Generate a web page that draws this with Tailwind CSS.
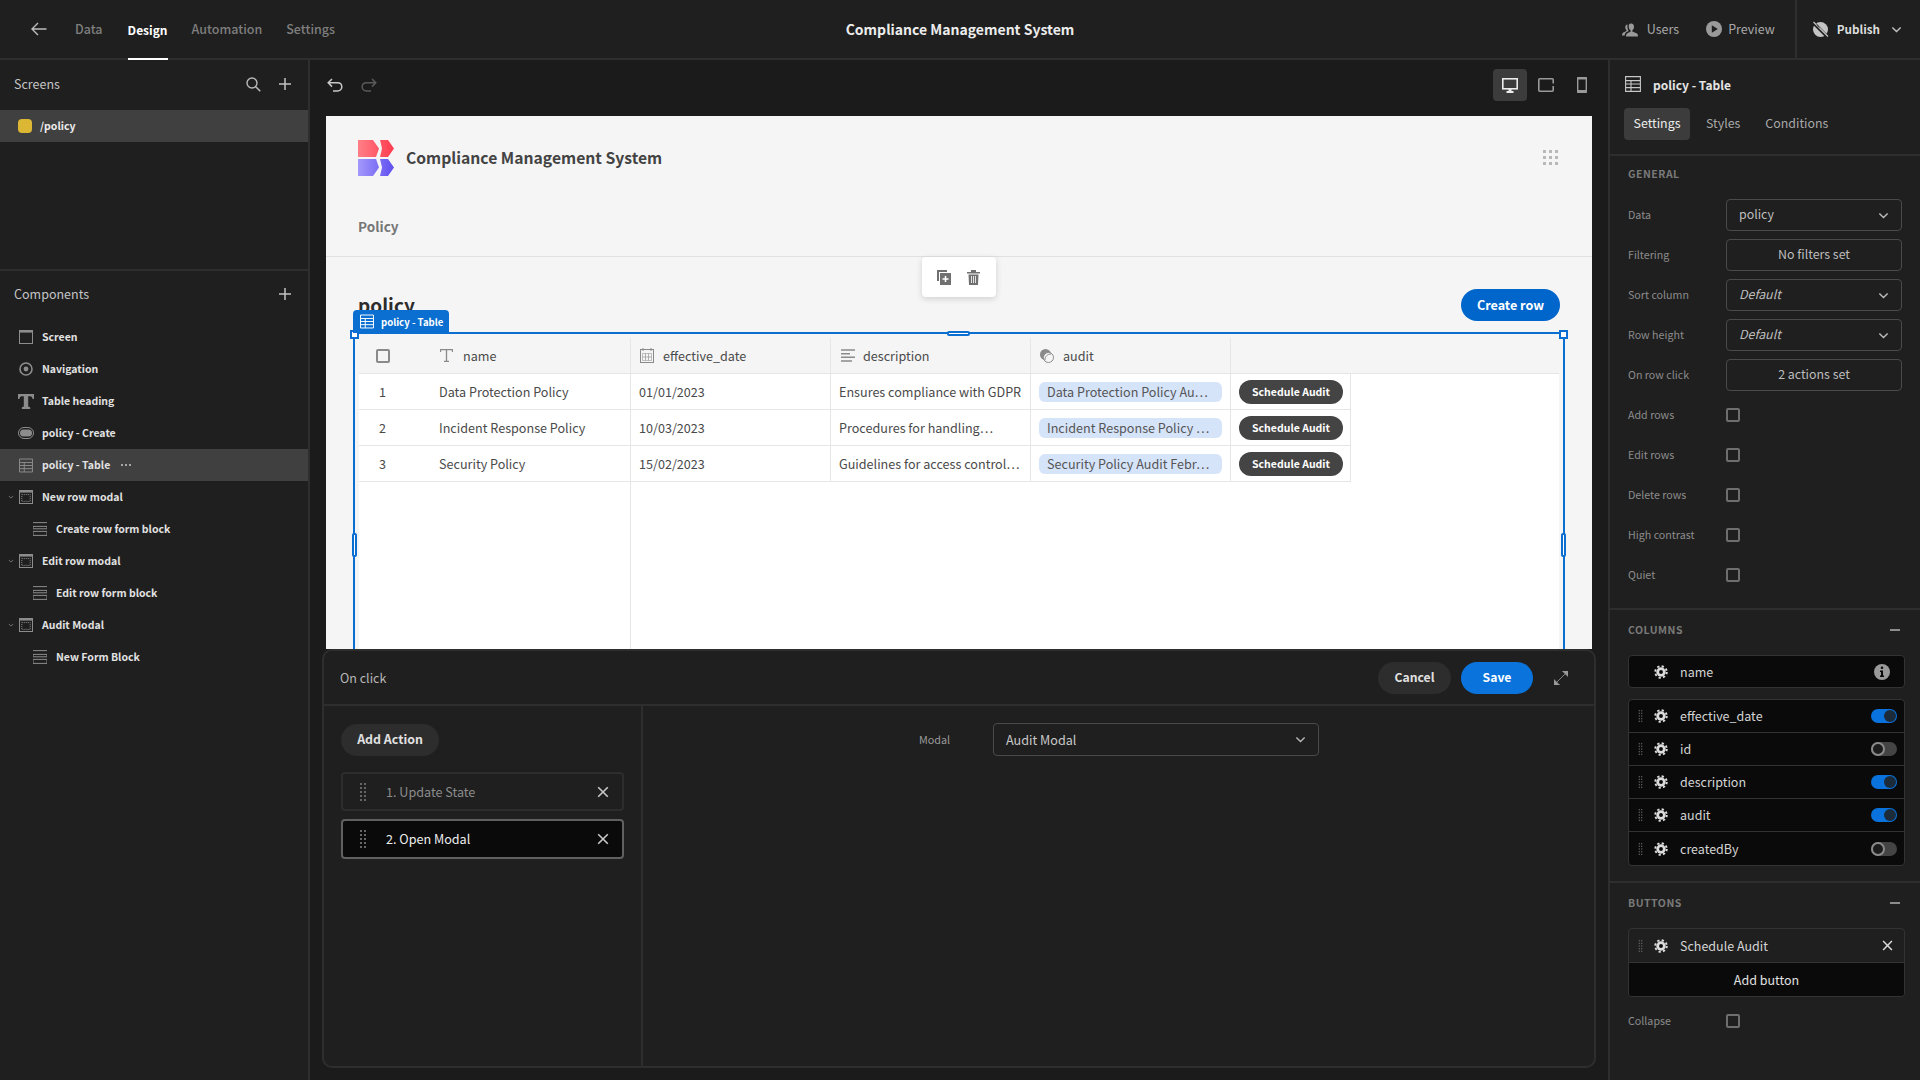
<!DOCTYPE html>
<html lang="en">
<head>
<meta charset="UTF-8">
<title>Compliance Management System</title>
<script src="https://cdn.jsdelivr.net/npm/@tailwindcss/browser@4"></script>
</head>
<body class="w-[1920px] h-[1080px] overflow-hidden bg-[#1f1f1f] text-[#c8c8c8] leading-[1.25] font-['Noto_Sans_CJK_SC','Liberation_Sans',sans-serif]">

<svg class="hidden" width="0" height="0">
  <symbol id="chev" viewBox="0 0 12 12"><path d="M1.5 3.8 6 8.3l4.5-4.5" fill="none" stroke="currentColor" stroke-width="1.5"/></symbol>
  <symbol id="cross" viewBox="0 0 12 12"><path d="M1.2 1.2l9.6 9.6M10.8 1.2l-9.6 9.6" fill="none" stroke="currentColor" stroke-width="1.6"/></symbol>
  <symbol id="plus" viewBox="0 0 12 12"><path d="M6 0v12M0 6h12" fill="none" stroke="currentColor" stroke-width="1.5"/></symbol>
  <symbol id="grip" viewBox="0 0 6 18"><g fill="currentColor"><rect x="0" y="0" width="2" height="2"/><rect x="4" y="0" width="2" height="2"/><rect x="0" y="4" width="2" height="2"/><rect x="4" y="4" width="2" height="2"/><rect x="0" y="8" width="2" height="2"/><rect x="4" y="8" width="2" height="2"/><rect x="0" y="12" width="2" height="2"/><rect x="4" y="12" width="2" height="2"/><rect x="0" y="16" width="2" height="2"/><rect x="4" y="16" width="2" height="2"/></g></symbol>
  <symbol id="gear" viewBox="0 0 16 16"><circle cx="8" cy="8" r="5.4" fill="currentColor"/><circle cx="8" cy="8" r="6.6" fill="none" stroke="currentColor" stroke-width="2.2" stroke-dasharray="2.6 2.58"/><circle cx="8" cy="8" r="2.2" fill="#0a0a0a"/></symbol>
  <symbol id="table" viewBox="0 0 16 16"><path d="M.6.6h14.8v14.8H.6zM.6 4.6h14.8M.6 8h14.8M.6 11.6h14.8M6 4.6v10.8" fill="none" stroke="currentColor" stroke-width="1.1"/></symbol>
  <symbol id="modal" viewBox="0 0 14 14"><rect x=".5" y=".5" width="13" height="13" fill="none" stroke="currentColor"/><rect x="0" y="0" width="14" height="2.6" fill="currentColor"/><rect x="2.8" y="4.6" width="8.4" height="6.8" fill="none" stroke="currentColor" stroke-dasharray="1 1"/></symbol>
  <symbol id="form" viewBox="0 0 14 14"><path d="M0 .6h14M0 4.4h14v2.4H0zM0 9.4h14v4H0z" fill="none" stroke="currentColor"/></symbol>
</svg>

<!-- top bar -->
<header class="h-[60px] bg-[#1f1f1f] border-b-2 border-[#2e2e2e] flex items-stretch relative">
  <div class="flex items-center w-[500px] pl-[31px] text-[12.5px] font-medium text-[#7e7e7e]">
    <svg class="w-[16px] h-[14px] shrink-0 text-[#bdbdbd] mr-[28px]" viewBox="0 0 16 14"><path d="M15.5 7H1M7 1 1 7l6 6" fill="none" stroke="currentColor" stroke-width="1.4"/></svg>
    <span class="mr-[25px]">Data</span>
    <span class="mr-[24px] h-[60px] flex items-center text-[12px] text-white font-semibold border-b-2 border-white -mb-[2px]">Design</span>
    <span class="mr-[24px]">Automation</span>
    <span>Settings</span>
  </div>
  <div class="absolute left-0 right-0 top-0 h-[59px] flex items-center justify-center text-[14px] font-semibold text-[#ececec]"><span>Compliance Management System</span></div>
  <div class="ml-auto flex items-center text-[12.5px] text-[#a8a8a8] relative">
    <svg class="w-[17px] h-[15px] mr-[8px] text-[#9a9a9a]" viewBox="0 0 17 15"><path d="M9 1.5c2 0 3.3 1.6 3 3.8-.2 1.4-.9 2.6-1.700 3.100v1l4.200 1.800c1 .5 1.500 1.300 1.500 3.300H4c0-2 .5-2.800 1.500-3.300l3.200-1.800v-1C7.800 7.900 7 6.700 6.800 5.300 6.500 3.100 7 1.500 9 1.500z" fill="currentColor"/><path d="M5.500 2.500c-1.500.2-2.400 1.500-2.200 3.300.1 1.100.6 2 1.200 2.500v.8L1.300 10.500C.5 11 0 11.800 0 13.500h2.700c.1-1.600.8-2.800 2-3.400l2-1.100C5.700 7.500 5.100 5.500 5.500 2.500z" fill="currentColor"/></svg>
    <span class="mr-[27px]">Users</span>
    <svg class="w-[16px] h-[16px] mr-[6px] text-[#9a9a9a]" viewBox="0 0 16 16"><circle cx="8" cy="8" r="8" fill="currentColor"/><path d="M5.800 4.300v7.400L11.800 8z" fill="#1f1f1f"/></svg>
    <span class="mr-[20px]">Preview</span>
    <div class="w-[2px] self-stretch bg-[#2e2e2e]"></div>
    <svg class="w-[17px] h-[17px] ml-[15px] mr-[8px] text-[#c4c4c4]" viewBox="0 0 17 17"><circle cx="8.500" cy="8.500" r="7.500" fill="currentColor"/><path d="M1 1.500l14.500 14.500" stroke="#1f1f1f" stroke-width="3.200"/><path d="M1.500 1l14.500 14.500" stroke="currentColor" stroke-width="1.300"/><path d="M5 3.500c1 1 1 2.500 2.500 3" stroke="#1f1f1f" stroke-width="1" fill="none"/></svg>
    <span class="text-[11.7px] font-semibold text-[#dcdcdc] mr-[11px]">Publish</span>
    <svg class="w-[11px] h-[11px] text-[#c4c4c4] mr-[18px]"><use href="#chev"/></svg>
  </div>
</header>

<div class="flex h-[1020px]">
  <!-- left panel -->
  <aside class="w-[310px] border-r-2 border-[#2e2e2e] bg-[#1f1f1f] flex flex-col shrink-0">
    <div class="h-[211px] border-b-2 border-[#2e2e2e]">
      <div class="h-[50px] flex items-center pl-[14px] pr-[17px] pb-[2px] text-[12.5px] text-[#c4c4c4]">
        <span>Screens</span>
        <svg class="w-[15px] h-[15px] ml-auto mr-[18px] text-[#b8b8b8]" viewBox="0 0 15 15"><circle cx="6" cy="6" r="5" fill="none" stroke="currentColor" stroke-width="1.400"/><path d="M9.700 9.700l4.600 4.600" stroke="currentColor" stroke-width="1.600"/></svg>
        <svg class="w-[12px] h-[12px] text-[#c4c4c4]"><use href="#plus"/></svg>
      </div>
      <div class="h-[32px] bg-[#404040] flex items-center pl-[18px] gap-[8px] text-[10.5px] font-semibold text-[#ececec]">
        <span class="w-[14px] h-[14px] rounded-[4px] bg-[#dcb734]"></span><span>/policy</span>
      </div>
    </div>
    <div class="h-[50px] mt-[-1px] flex items-center pl-[14px] pr-[17px] pb-[2px] text-[12.5px] text-[#c4c4c4]">
      <span>Components</span>
      <svg class="w-[12px] h-[12px] ml-auto text-[#c4c4c4]"><use href="#plus"/></svg>
    </div>
    <div class="text-[10.5px] font-semibold text-[#e2e2e2] pt-[1px]">
      <div class="h-8 flex items-center pl-[19px] gap-[9px]"><svg class="w-[14px] h-[14px] text-[#8c8c8c]" viewBox="0 0 14 14"><rect x=".5" y=".5" width="13" height="13" fill="none" stroke="currentColor"/><rect width="14" height="2.600" fill="currentColor"/></svg>Screen</div>
      <div class="h-8 flex items-center pl-[19px] gap-[9px]"><svg class="w-[14px] h-[14px] text-[#8c8c8c]" viewBox="0 0 14 14"><circle cx="7" cy="7" r="6" fill="none" stroke="currentColor" stroke-width="1.600"/><circle cx="7" cy="7" r="2.400" fill="currentColor"/></svg>Navigation</div>
      <div class="h-8 flex items-center pl-[18px] gap-[8px]"><svg class="w-[16px] h-[15px] text-[#8c8c8c]" viewBox="0 0 16 15"><path d="M0 0h16v5h-1.500c0-2-.8-2.800-2.500-2.800h-1.800v10.300l2 .8V15H3.800v-1.700l2-.8V2.200H4C2.300 2.200 1.500 3 1.500 5H0z" fill="currentColor"/></svg>Table heading</div>
      <div class="h-8 flex items-center pl-[18px] gap-[8px]"><svg class="w-[16px] h-[12px] text-[#8c8c8c]" viewBox="0 0 16 12"><rect x=".5" y=".5" width="15" height="11" rx="5.500" fill="none" stroke="currentColor"/><rect x="2" y="2.500" width="12" height="7" rx="3.500" fill="currentColor"/></svg>policy - Create</div>
      <div class="h-8 bg-[#404040] flex items-center pl-[19px] gap-[9px]"><svg class="w-[14px] h-[15px] text-[#8c8c8c]"><use href="#table"/></svg>policy - Table<span class="ml-[2px] flex gap-[2px]"><i class="w-[2px] h-[2px] bg-[#c8c8c8] rounded-full"></i><i class="w-[2px] h-[2px] bg-[#c8c8c8] rounded-full"></i><i class="w-[2px] h-[2px] bg-[#c8c8c8] rounded-full"></i></span></div>
      <div class="h-8 flex items-center pl-[8px]"><svg class="w-[6px] h-[6px] text-[#8c8c8c] mr-[5px]"><use href="#chev"/></svg><svg class="w-[14px] h-[14px] text-[#8c8c8c] mr-[9px]"><use href="#modal"/></svg>New row modal</div>
      <div class="h-8 flex items-center pl-[33px] gap-[9px]"><svg class="w-[14px] h-[14px] text-[#8c8c8c]"><use href="#form"/></svg>Create row form block</div>
      <div class="h-8 flex items-center pl-[8px]"><svg class="w-[6px] h-[6px] text-[#8c8c8c] mr-[5px]"><use href="#chev"/></svg><svg class="w-[14px] h-[14px] text-[#8c8c8c] mr-[9px]"><use href="#modal"/></svg>Edit row modal</div>
      <div class="h-8 flex items-center pl-[33px] gap-[9px]"><svg class="w-[14px] h-[14px] text-[#8c8c8c]"><use href="#form"/></svg>Edit row form block</div>
      <div class="h-8 flex items-center pl-[8px]"><svg class="w-[6px] h-[6px] text-[#8c8c8c] mr-[5px]"><use href="#chev"/></svg><svg class="w-[14px] h-[14px] text-[#8c8c8c] mr-[9px]"><use href="#modal"/></svg>Audit Modal</div>
      <div class="h-8 flex items-center pl-[33px] gap-[9px]"><svg class="w-[14px] h-[14px] text-[#8c8c8c]"><use href="#form"/></svg>New Form Block</div>
    </div>
  </aside>

  <!-- canvas -->
  <main class="w-[1300px] shrink-0 bg-[#1b1b1b] border-r-2 border-[#2e2e2e] flex flex-col box-border">
    <div class="h-[56px] flex items-center pl-[17px] pr-[15px] pb-[6px]">
      <svg class="w-[16px] h-[14px] text-[#c8c8c8]" viewBox="0 0 16 14"><path d="M5 1 1.200 4.800 5 8.600M1.500 4.800h9c2.500 0 4.300 1.700 4.300 4s-1.800 4.200-4.300 4.200H6" fill="none" stroke="currentColor" stroke-width="1.500"/></svg>
      <svg class="w-[16px] h-[14px] ml-[18px] text-[#5a5a5a]" viewBox="0 0 16 14"><path d="M11 1l3.800 3.800L11 8.600M14.500 4.800h-9C3 4.800 1.200 6.500 1.200 8.800S3 13 5.500 13H10" fill="none" stroke="currentColor" stroke-width="1.500"/></svg>
      <div class="ml-auto flex items-center">
        <div class="w-[34px] h-[32px] rounded-[4px] bg-[#3c3c3c] flex items-center justify-center"><svg class="w-[16px] h-[15px] text-[#ececec]" viewBox="0 0 16 15"><rect x=".8" y=".8" width="14.400" height="10" fill="none" stroke="currentColor" stroke-width="1.600"/><path d="M6.500 11h3v2h2v2h-7v-2h2z" fill="currentColor"/></svg></div>
        <svg class="w-[16px] h-[14px] ml-[11px] text-[#9a9a9a]" viewBox="0 0 16 14"><rect x=".8" y=".8" width="14.400" height="12.400" rx="1" fill="none" stroke="currentColor" stroke-width="1.600"/><rect x="13.500" y="5.500" width="2.500" height="2.500" fill="#1b1b1b"/></svg>
        <svg class="w-[10px] h-[16px] ml-[23px] mr-[6px] text-[#9a9a9a]" viewBox="0 0 10 16"><rect x=".7" y=".7" width="8.600" height="14.600" rx="1" fill="none" stroke="currentColor" stroke-width="1.400"/><rect x="0" y="0" width="10" height="2.500" rx="1" fill="currentColor"/><rect x="0" y="13" width="10" height="3" rx="1" fill="currentColor"/></svg>
      </div>
    </div>

    <!-- app preview -->
    <div class="mx-[16px] h-[533px] bg-[#f5f5f5] relative overflow-hidden shrink-0">
      <div class="h-[141px] border-b border-[#e0e0e0] px-[32px] pt-[24px]">
        <div class="flex items-center gap-[12px] h-[36px]">
          <svg class="w-[36px] h-[36px]" viewBox="0 0 36 36"><defs><linearGradient id="lr" x1="0" x2="1"><stop offset="0" stop-color="#ff7f87"/><stop offset="1" stop-color="#ff3b4e"/></linearGradient><linearGradient id="lb" x1="0" x2="1"><stop offset="0" stop-color="#a398fb"/><stop offset="1" stop-color="#5f4ff0"/></linearGradient></defs><path d="M0 0h15l6 8.500-3 8.500H0zM22 0h8l6 8.500-6 8.500h-8l2-8.500z" fill="url(#lr)"/><path d="M0 19h18l3 8.500-6 8.500H0zM22 19h8l6 8.500-6 8.500h-8l2-8.500z" fill="url(#lb)"/></svg>
          <span class="text-[15.7px] font-semibold text-[#434343]">Compliance Management System</span>
          <div class="ml-auto mr-[2px] mb-[2px] grid grid-cols-3 gap-[3px]"><i class="w-[3px] h-[3px] bg-[#b8b8b8]"></i><i class="w-[3px] h-[3px] bg-[#b8b8b8]"></i><i class="w-[3px] h-[3px] bg-[#b8b8b8]"></i><i class="w-[3px] h-[3px] bg-[#b8b8b8]"></i><i class="w-[3px] h-[3px] bg-[#b8b8b8]"></i><i class="w-[3px] h-[3px] bg-[#b8b8b8]"></i><i class="w-[3px] h-[3px] bg-[#b8b8b8]"></i><i class="w-[3px] h-[3px] bg-[#b8b8b8]"></i><i class="w-[3px] h-[3px] bg-[#b8b8b8]"></i></div>
        </div>
        <div class="mt-[42px] text-[13.6px] font-semibold text-[#777777]">Policy</div>
      </div>
      <div class="h-[32px] mt-[32px] px-[32px] flex items-center justify-between">
        <span class="text-[19px] font-semibold text-[#2c2c2c]">policy</span>
        <span class="w-[99px] h-[32px] rounded-full bg-[#0066cc] text-white text-[12.6px] font-semibold flex items-center justify-center">Create row</span>
      </div>
      <!-- table -->
      <div class="mx-[33px] mt-[17px] h-[311px] bg-white flex flex-col text-[12.6px] text-[#4a4a4a]">
        <div class="h-[36px] bg-[#f5f5f5] flex border-b border-[#e6e6e6] shrink-0">
          <div class="w-[272px] border-r border-[#e6e6e6] flex items-center pl-[17px]">
            <span class="w-[14px] h-[14px] border-2 border-[#8a8a8a] rounded-[2px]"></span>
            <svg class="w-[13px] h-[13px] ml-[50px] text-[#8a8a8a]" viewBox="0 0 13 13"><path d="M.5 3V.7h12V3M6.500.7v11.600M4 12.300h5" fill="none" stroke="currentColor" stroke-width="1.300"/></svg>
            <span class="ml-[10px]">name</span>
          </div>
          <div class="w-[200px] border-r border-[#e6e6e6] flex items-center pl-[9px]">
            <svg class="w-[14px] h-[15px] text-[#8a8a8a]" viewBox="0 0 14 15"><rect x=".5" y="1.500" width="13" height="13" fill="none" stroke="currentColor"/><path d="M3 0v3M11 0v3" stroke="currentColor"/><path d="M2.500 5.500h9v7h-9z" fill="none" stroke="currentColor" stroke-dasharray="1 1"/><path d="M2.500 9h9M5.500 5.500v7M8.500 5.500v7" stroke="currentColor" stroke-width=".6"/></svg>
            <span class="ml-[9px]">effective_date</span>
          </div>
          <div class="w-[200px] border-r border-[#e6e6e6] flex items-center pl-[10px]">
            <svg class="w-[14px] h-[13px] text-[#8a8a8a]" viewBox="0 0 14 13"><path d="M0 1h14M0 4.700h9M0 8.300h14M0 12h11" stroke="currentColor" stroke-width="1.400"/></svg>
            <span class="ml-[8px]">description</span>
          </div>
          <div class="w-[200px] border-r border-[#e6e6e6] flex items-center pl-[9px]">
            <svg class="w-[14px] h-[14px] text-[#8a8a8a]" viewBox="0 0 14 14"><circle cx="5.500" cy="5.500" r="5.500" fill="currentColor"/><circle cx="8.500" cy="8.500" r="5" fill="#f5f5f5" stroke="currentColor"/><path d="M5 11c0-3.500 2.500-6 6-6" stroke="currentColor" fill="none"/></svg>
            <span class="ml-[9px]">audit</span>
          </div>
        </div>
        <div class="h-[36px] flex shrink-0">
          <div class="w-[272px] border-r border-b border-[#e6e6e6] flex items-center pl-[20px]"><span class="w-[60px]">1</span>Data Protection Policy</div>
          <div class="w-[200px] border-r border-b border-[#e6e6e6] flex items-center pl-[8px]">01/01/2023</div>
          <div class="w-[200px] border-r border-b border-[#e6e6e6] flex items-center pl-[8px] whitespace-nowrap">Ensures compliance with GDPR</div>
          <div class="w-[200px] border-r border-b border-[#e6e6e6] flex items-center pl-[8px]"><span class="w-[183px] h-[20px] rounded-[6px] bg-[#d6e4fa] pl-[8px] flex items-center whitespace-nowrap text-[#555555]">Data Protection Policy Au…</span></div>
          <div class="w-[120px] border-r border-b border-[#e6e6e6] flex items-center pl-[8px]"><span class="w-[104px] h-[24px] rounded-full bg-[#444444] text-white text-[10.5px] font-semibold flex items-center justify-center">Schedule Audit</span></div>
        </div>
        <div class="h-[36px] flex shrink-0">
          <div class="w-[272px] border-r border-b border-[#e6e6e6] flex items-center pl-[20px]"><span class="w-[60px]">2</span>Incident Response Policy</div>
          <div class="w-[200px] border-r border-b border-[#e6e6e6] flex items-center pl-[8px]">10/03/2023</div>
          <div class="w-[200px] border-r border-b border-[#e6e6e6] flex items-center pl-[8px] whitespace-nowrap">Procedures for handling…</div>
          <div class="w-[200px] border-r border-b border-[#e6e6e6] flex items-center pl-[8px]"><span class="w-[183px] h-[20px] rounded-[6px] bg-[#d6e4fa] pl-[8px] flex items-center whitespace-nowrap text-[#555555]">Incident Response Policy …</span></div>
          <div class="w-[120px] border-r border-b border-[#e6e6e6] flex items-center pl-[8px]"><span class="w-[104px] h-[24px] rounded-full bg-[#444444] text-white text-[10.5px] font-semibold flex items-center justify-center">Schedule Audit</span></div>
        </div>
        <div class="h-[36px] flex shrink-0">
          <div class="w-[272px] border-r border-b border-[#e6e6e6] flex items-center pl-[20px]"><span class="w-[60px]">3</span>Security Policy</div>
          <div class="w-[200px] border-r border-b border-[#e6e6e6] flex items-center pl-[8px]">15/02/2023</div>
          <div class="w-[200px] border-r border-b border-[#e6e6e6] flex items-center pl-[8px] whitespace-nowrap">Guidelines for access control…</div>
          <div class="w-[200px] border-r border-b border-[#e6e6e6] flex items-center pl-[8px]"><span class="w-[183px] h-[20px] rounded-[6px] bg-[#d6e4fa] pl-[8px] flex items-center whitespace-nowrap text-[#555555]">Security Policy Audit Febr…</span></div>
          <div class="w-[120px] border-r border-b border-[#e6e6e6] flex items-center pl-[8px]"><span class="w-[104px] h-[24px] rounded-full bg-[#444444] text-white text-[10.5px] font-semibold flex items-center justify-center">Schedule Audit</span></div>
        </div>
        <div class="flex-1"><div class="w-[272px] h-full border-r border-[#e6e6e6]"></div></div>
      </div>

      <!-- selection overlay -->
      <div class="absolute left-[27px] right-[27px] top-[216px] h-[340px] border-2 border-[#0a6fd1] pointer-events-none"></div>
      <div class="absolute left-[24px] top-[214px] w-[9px] h-[9px] bg-white border-2 border-[#0a6fd1]"></div>
      <div class="absolute right-[24px] top-[214px] w-[9px] h-[9px] bg-white border-2 border-[#0a6fd1]"></div>
      <div class="absolute left-[621px] top-[215px] w-[23px] h-[5px] bg-white border-2 border-[#0a6fd1] rounded-[2px]"></div>
      <div class="absolute left-[26px] top-[417px] w-[5px] h-[24px] bg-white border-2 border-[#0a6fd1] rounded-[2px]"></div>
      <div class="absolute right-[26px] top-[417px] w-[5px] h-[24px] bg-white border-2 border-[#0a6fd1] rounded-[2px]"></div>
      <div class="absolute left-[27px] top-[194px] w-[96px] h-[23px] bg-[#0a6fd1] rounded-t-[4px] flex items-center pl-[7px] gap-[7px] whitespace-nowrap text-white text-[9.6px] font-semibold">
        <svg class="w-[14px] h-[15px]"><use href="#table"/></svg>policy - Table
      </div>
      <div class="absolute left-[596px] top-[141px] w-[74px] h-[40px] bg-white rounded-[4px] shadow-[0_2px_6px_rgba(0,0,0,0.15)] flex items-center justify-center gap-[16px] pr-[2px] text-[#707070]">
        <svg class="w-[14px] h-[15px]" viewBox="0 0 14 15"><path d="M0 0h10v2H2v9H0z" fill="currentColor"/><path d="M3 3h11v12H3z" fill="currentColor"/><path d="M8.500 6v6M5.500 9h6" stroke="#fff" stroke-width="1.500"/></svg>
        <svg class="w-[13px] h-[15px]" viewBox="0 0 13 15"><path d="M0 2h13v1.500H0zM4 0h5v2H4zM1.500 4.500h10L11 15H2z" fill="currentColor"/><path d="M4.500 6v7M6.500 6v7M8.500 6v7" stroke="#fff" stroke-width=".8"/></svg>
      </div>
    </div>

    <!-- actions drawer -->
    <div class="mx-[12px] h-[419px] shrink-0 bg-[#1f1f1f] border-2 border-[#2e2e2e] rounded-[10px] flex flex-col">
      <div class="h-[55px] shrink-0 border-b-2 border-[#2e2e2e] flex items-center pl-[16px] pr-[26px]">
        <span class="text-[12.5px] text-[#b8b8b8]">On click</span>
        <span class="ml-auto w-[73px] h-[32px] rounded-full bg-[#2d2d2d] text-[12.2px] font-semibold text-[#e0e0e0] flex items-center justify-center">Cancel</span>
        <span class="ml-[10px] w-[72px] h-[32px] rounded-full bg-[#0a74dc] text-[12.2px] font-semibold text-white flex items-center justify-center">Save</span>
        <svg class="w-[14px] h-[14px] ml-[21px] text-[#9a9a9a]" viewBox="0 0 14 14"><path d="M1 13 13 1M8.500 0H14v5.500L8.500 0zM0 8.500V14h5.500L0 8.500z" fill="currentColor" stroke="currentColor" stroke-width=".8"/></svg>
      </div>
      <div class="flex-1 flex">
        <div class="w-[319px] border-r-2 border-[#2e2e2e] pl-[17px] pr-[17px] pt-[18px]">
          <span class="w-[98px] h-[32px] rounded-full bg-[#2d2d2d] text-[12.4px] font-semibold text-[#e0e0e0] flex items-center justify-center">Add Action</span>
          <div class="mt-[16px] h-[39px] w-[283px] border-2 border-[#2d2d2d] rounded-[4px] flex items-center pl-[17px] pr-[13px] text-[12.6px] text-[#8c8c8c]">
            <svg class="w-[6px] h-[18px] text-[#666666]"><use href="#grip"/></svg><span class="ml-[20px]">1. Update State</span><svg class="w-[12px] h-[12px] ml-auto text-[#c8c8c8]"><use href="#cross"/></svg>
          </div>
          <div class="mt-[8px] h-[40px] w-[283px] bg-[#0a0a0a] border-2 border-[#606060] rounded-[4px] flex items-center pl-[17px] pr-[13px] text-[12.6px] text-[#eeeeee]">
            <svg class="w-[6px] h-[18px] text-[#666666]"><use href="#grip"/></svg><span class="ml-[20px]">2. Open Modal</span><svg class="w-[12px] h-[12px] ml-auto text-[#c8c8c8]"><use href="#cross"/></svg>
          </div>
        </div>
        <div class="flex-1 pt-[17px] pl-[276px]">
          <div class="flex items-center h-[33px]">
            <span class="w-[74px] text-[10.8px] text-[#9a9a9a]">Modal</span>
            <div class="w-[326px] h-[33px] border border-[#4a4a4a] rounded-[4px] flex items-center pl-[12px] pr-[12px] text-[12.6px] text-[#c8c8c8]">Audit Modal<svg class="w-[11px] h-[11px] ml-auto text-[#b8b8b8]"><use href="#chev"/></svg></div>
          </div>
        </div>
      </div>
    </div>
  </main>

  <!-- settings panel -->
  <aside class="flex-1 bg-[#1f1f1f] text-[10.7px]">
    <div class="flex items-center pl-[15px] pt-[16px] text-[#e4e4e4]">
      <svg class="w-[16px] h-[16px] text-[#c8c8c8]"><use href="#table"/></svg>
      <span class="ml-[12px] text-[12px] font-semibold">policy - Table</span>
    </div>
    <div class="flex items-center pl-[14px] mt-[16px] h-[32px] text-[12.4px] text-[#a8a8a8]">
      <span class="w-[66px] h-[32px] rounded-[4px] bg-[#3c3c3c] text-[#ececec] flex items-center justify-center">Settings</span>
      <span class="ml-[16px]">Styles</span>
      <span class="ml-[25px]">Conditions</span>
    </div>
    <div class="mt-[14px] h-[456px] border-t-2 border-b-2 border-[#2e2e2e] pl-[18px] pr-[18px]">
      <div class="mt-[11px] h-[17px] text-[10.5px] font-semibold tracking-[0.5px] text-[#7a7a7a]">GENERAL</div>
      <div class="mt-[15px] flex flex-col gap-[8px] text-[#8c8c8c]">
        <div class="flex items-center h-[32px]"><span class="w-[98px]">Data</span><div class="w-[176px] h-[32px] border border-[#4a4a4a] rounded-[4px] flex items-center px-[12px] text-[12.4px] text-[#bdbdbd]">policy<svg class="w-[11px] h-[11px] ml-auto text-[#bdbdbd]"><use href="#chev"/></svg></div></div>
        <div class="flex items-center h-[32px]"><span class="w-[98px]">Filtering</span><div class="w-[176px] h-[32px] border border-[#4a4a4a] rounded-[4px] flex items-center justify-center text-[12.4px] text-[#bdbdbd]">No filters set</div></div>
        <div class="flex items-center h-[32px]"><span class="w-[98px]">Sort column</span><div class="w-[176px] h-[32px] border border-[#4a4a4a] rounded-[4px] flex items-center px-[12px] text-[12.4px] italic text-[#bdbdbd]">Default<svg class="w-[11px] h-[11px] ml-auto text-[#bdbdbd]"><use href="#chev"/></svg></div></div>
        <div class="flex items-center h-[32px]"><span class="w-[98px]">Row height</span><div class="w-[176px] h-[32px] border border-[#4a4a4a] rounded-[4px] flex items-center px-[12px] text-[12.4px] italic text-[#bdbdbd]">Default<svg class="w-[11px] h-[11px] ml-auto text-[#bdbdbd]"><use href="#chev"/></svg></div></div>
        <div class="flex items-center h-[32px]"><span class="w-[98px]">On row click</span><div class="w-[176px] h-[32px] border border-[#4a4a4a] rounded-[4px] flex items-center justify-center text-[12.4px] text-[#bdbdbd]">2 actions set</div></div>
        <div class="flex items-center h-[32px]"><span class="w-[98px]">Add rows</span><span class="w-[14px] h-[14px] border-2 border-[#6e6e6e] rounded-[2px]"></span></div>
        <div class="flex items-center h-[32px]"><span class="w-[98px]">Edit rows</span><span class="w-[14px] h-[14px] border-2 border-[#6e6e6e] rounded-[2px]"></span></div>
        <div class="flex items-center h-[32px]"><span class="w-[98px]">Delete rows</span><span class="w-[14px] h-[14px] border-2 border-[#6e6e6e] rounded-[2px]"></span></div>
        <div class="flex items-center h-[32px]"><span class="w-[98px]">High contrast</span><span class="w-[14px] h-[14px] border-2 border-[#6e6e6e] rounded-[2px]"></span></div>
        <div class="flex items-center h-[32px]"><span class="w-[98px]">Quiet</span><span class="w-[14px] h-[14px] border-2 border-[#6e6e6e] rounded-[2px]"></span></div>
      </div>
    </div>

    <div class="h-[273px] border-b-2 border-[#2e2e2e] pl-[18px] pr-[15px]">
      <div class="h-[40px] flex items-center justify-between pr-[5px] text-[10.5px] font-semibold tracking-[0.5px] text-[#7a7a7a]">COLUMNS<span class="w-[10px] h-[2px] bg-[#8c8c8c]"></span></div>
      <div class="mt-[5px] h-[33px] bg-[#0a0a0a] border border-[#333333] rounded-[4px] flex items-center pl-[25px] pr-[14px] text-[12.5px] text-[#d4d4d4]">
        <svg class="w-[14px] h-[14px] text-[#dcdcdc]"><use href="#gear"/></svg><span class="ml-[12px]">name</span>
        <svg class="w-[16px] h-[16px] ml-auto" viewBox="0 0 16 16"><circle cx="8" cy="8" r="8" fill="#9a9a9a"/><path d="M8 2.500a1.300 1.300 0 1 1 0 2.600 1.300 1.300 0 0 1 0-2.600zM6 6.500h3v5h1v1.500H6v-1.500h1V8H6z" fill="#0a0a0a"/></svg>
      </div>
      <div class="mt-[11px] bg-[#0a0a0a] border border-[#333333] rounded-[4px] text-[12.5px] text-[#d4d4d4] divide-y divide-[#333333]">
        <div class="h-[33px] flex items-center pl-[9px] pr-[7px]"><svg class="w-[5px] h-[12px] text-[#666666]" viewBox="0 0 6 18"><use href="#grip"/></svg><svg class="w-[14px] h-[14px] ml-[11px] text-[#dcdcdc]"><use href="#gear"/></svg><span class="ml-[12px]">effective_date</span><span class="ml-auto w-[26px] h-[14px] rounded-full bg-[#0a72dc] flex items-center justify-end pr-[1px]"><i class="w-[12px] h-[12px] rounded-full bg-[#1c2b3a]"></i></span></div>
        <div class="h-[33px] flex items-center pl-[9px] pr-[7px]"><svg class="w-[5px] h-[12px] text-[#666666]" viewBox="0 0 6 18"><use href="#grip"/></svg><svg class="w-[14px] h-[14px] ml-[11px] text-[#dcdcdc]"><use href="#gear"/></svg><span class="ml-[12px]">id</span><span class="ml-auto w-[26px] h-[14px] rounded-full bg-[#444444] flex items-center"><i class="w-[14px] h-[14px] rounded-full bg-[#1c1c1c] border-2 border-[#8a8a8a]"></i></span></div>
        <div class="h-[33px] flex items-center pl-[9px] pr-[7px]"><svg class="w-[5px] h-[12px] text-[#666666]" viewBox="0 0 6 18"><use href="#grip"/></svg><svg class="w-[14px] h-[14px] ml-[11px] text-[#dcdcdc]"><use href="#gear"/></svg><span class="ml-[12px]">description</span><span class="ml-auto w-[26px] h-[14px] rounded-full bg-[#0a72dc] flex items-center justify-end pr-[1px]"><i class="w-[12px] h-[12px] rounded-full bg-[#1c2b3a]"></i></span></div>
        <div class="h-[33px] flex items-center pl-[9px] pr-[7px]"><svg class="w-[5px] h-[12px] text-[#666666]" viewBox="0 0 6 18"><use href="#grip"/></svg><svg class="w-[14px] h-[14px] ml-[11px] text-[#dcdcdc]"><use href="#gear"/></svg><span class="ml-[12px]">audit</span><span class="ml-auto w-[26px] h-[14px] rounded-full bg-[#0a72dc] flex items-center justify-end pr-[1px]"><i class="w-[12px] h-[12px] rounded-full bg-[#1c2b3a]"></i></span></div>
        <div class="h-[33px] flex items-center pl-[9px] pr-[7px]"><svg class="w-[5px] h-[12px] text-[#666666]" viewBox="0 0 6 18"><use href="#grip"/></svg><svg class="w-[14px] h-[14px] ml-[11px] text-[#dcdcdc]"><use href="#gear"/></svg><span class="ml-[12px]">createdBy</span><span class="ml-auto w-[26px] h-[14px] rounded-full bg-[#444444] flex items-center"><i class="w-[14px] h-[14px] rounded-full bg-[#1c1c1c] border-2 border-[#8a8a8a]"></i></span></div>
      </div>
    </div>

    <div class="pl-[18px] pr-[15px]">
      <div class="h-[40px] flex items-center justify-between pr-[5px] text-[10.5px] font-semibold tracking-[0.5px] text-[#7a7a7a]">BUTTONS<span class="w-[10px] h-[2px] bg-[#8c8c8c]"></span></div>
      <div class="mt-[5px] border border-[#333333] rounded-[4px] text-[12.5px] text-[#d4d4d4] overflow-hidden">
        <div class="h-[34px] flex items-center pl-[9px] pr-[11px] border-b border-[#333333]"><svg class="w-[5px] h-[12px] text-[#666666]" viewBox="0 0 6 18"><use href="#grip"/></svg><svg class="w-[14px] h-[14px] ml-[11px] text-[#dcdcdc]"><use href="#gear"/></svg><span class="ml-[12px]">Schedule Audit</span><svg class="w-[11px] h-[11px] ml-auto text-[#dcdcdc]"><use href="#cross"/></svg></div>
        <div class="h-[33px] bg-[#0a0a0a] flex items-center justify-center text-[#e0e0e0]">Add button</div>
      </div>
      <div class="mt-[8px] flex items-center h-[32px] text-[#8c8c8c]"><span class="w-[98px]">Collapse</span><span class="w-[14px] h-[14px] border-2 border-[#6e6e6e] rounded-[2px]"></span></div>
    </div>
  </aside>
</div>
</body>
</html>
